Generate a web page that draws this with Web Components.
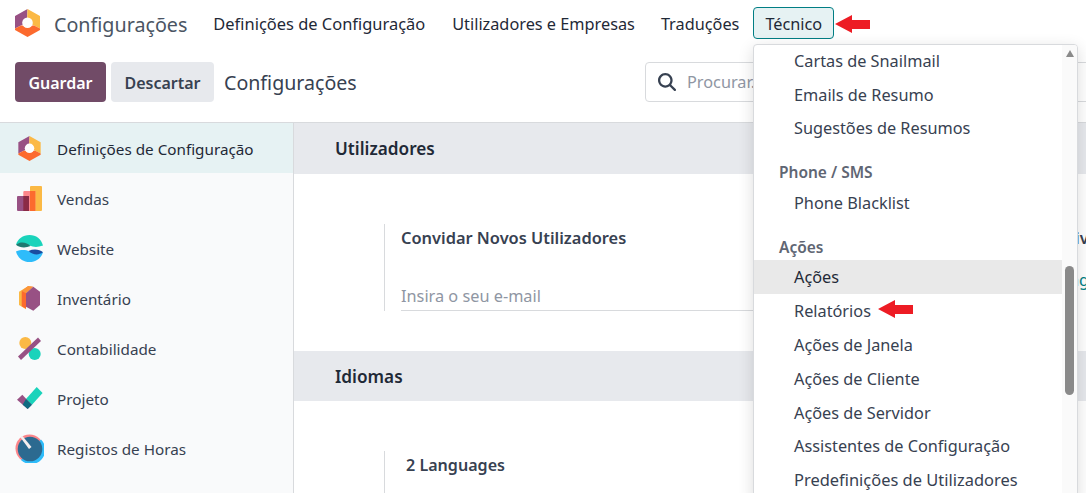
<!DOCTYPE html>
<html lang="pt"><head><meta charset="utf-8"><title>Configurações</title>
<style>
html,body{margin:0;height:100%;overflow:hidden;background:#fff}
body{font-family:"Noto Sans","Open Sans",sans-serif;color:#374151;font-size:15px}
</style></head><body>
<app-shell>
  <top-nav></top-nav>
  <control-panel></control-panel>
  <div slot="side">
    <side-item active label="Definições de Configuração" icon="settings"></side-item>
    <side-item label="Vendas" icon="sales"></side-item>
    <side-item label="Website" icon="website"></side-item>
    <side-item label="Inventário" icon="inventory"></side-item>
    <side-item label="Contabilidade" icon="accounting"></side-item>
    <side-item label="Projeto" icon="project"></side-item>
    <side-item label="Registos de Horas" icon="timesheet"></side-item>
    <side-item label="" icon="more"></side-item>
  </div>
  <settings-pane slot="main"></settings-pane>
  <tech-menu slot="overlay"></tech-menu>
</app-shell>
<script>
const hex=(w,h)=>`<svg viewBox="0 0 25 28" width="${w}" height="${h}"><path d="M12.500 0 0 7V19.500L6 16.500 12 14z" fill="#985184"/><path d="M12.500 0 25 7V19.500L19 16.500 12 14z" fill="#fbb945"/><path d="M0 19.500 6 16.500H19L25 19.500V21L12.500 28 0 21z" fill="#fc6a2e"/><circle cx="12.500" cy="13.800" r="5.300" fill="#fdfdfd"/></svg>`;
const ICONS={
settings:hex(23,25),
sales:`<svg viewBox="0 0 25 25" width="25" height="25"><path d="M13 1a1 1 0 0 1 1-1h10a1 1 0 0 1 1 1v23a1 1 0 0 1-1 1H13z" fill="#fbb945"/><path d="M6.300 6a1 1 0 0 1 1-1h11v20H6.300z" fill="#fc868b"/><rect x="13" y="5" width="5.300" height="20" fill="#fc6a2e"/><path d="M0 11a1 1 0 0 1 1-1h11v15H1a1 1 0 0 1-1-1z" fill="#985184"/><rect x="6.300" y="10" width="5.700" height="15" fill="#8b2b46"/></svg>`,
website:`<svg viewBox="0 0 30 30" width="29" height="29"><path d="M1 11C3 5 8 1 15 1c7 0 12 4 14 11-6 2-10 1.500-14 0-5-2-9-3-14-1z" fill="#1ad3bb"/><path d="M1 11c5-3.500 11-2.500 15 1.500-5 2-11 2-15-1.500z" fill="#1f7a70"/><g transform="rotate(180 15 15)"><path d="M1 11C3 5 8 1 15 1c7 0 12 4 14 11-6 2-10 1.500-14 0-5-2-9-3-14-1z" fill="#2ebcfa"/><path d="M1 11c5-3.500 11-2.500 15 1.500-5 2-11 2-15-1.500z" fill="#1a4da0"/></g></svg>`,
inventory:`<svg viewBox="0 0 21 25" width="21" height="25"><path d="M9.300 0 0 5.700V19l7 4.200V7z" fill="#fbb945"/><path d="M9.300 0l5 .7L7 7.300v15.500L2.700 20.300V5z" fill="#fc6a2e"/><path d="M9.300 0l5 .7L7 7.300 2.700 5z" fill="#fbb945" opacity=".55"/><path d="M14.300.7 21 5.700V19l-6.700 5.700L7 20.700V7.300z" fill="#985184"/></svg>`,
accounting:`<svg viewBox="0 0 23 23" width="23" height="23"><circle cx="7.300" cy="6" r="6" fill="#fbb945"/><circle cx="16.700" cy="17" r="6" fill="#1ad3bb"/><path d="M0 19.500 20 .5l3 3.500L3 23z" fill="#985184"/></svg>`,
project:`<svg viewBox="0 0 26 23" width="26" height="23"><path d="M19.700 0 25.600 6 15 17.700 9 12z" fill="#1ad3bb"/><path d="M0 12.700 5.300 7.700 14.700 17.700 10.700 22z" fill="#985184"/><path d="M9 12l6 5.700L10.700 22l-5-4.300z" fill="#0e6a80"/></svg>`,
timesheet:`<svg viewBox="0 0 29 29" width="29" height="29"><circle cx="14.500" cy="14.500" r="14" fill="#fc868b"/><path d="M26 5.500A14 14 0 0 1 6 26z" fill="#2ebcfa"/><circle cx="15" cy="15" r="12.300" fill="#2c6a90"/><path d="M5.500 3.500l2-1.500 9 11-2.500 2z" fill="#f6eeee"/></svg>`,
more:`<svg viewBox="0 0 11 11" width="11" height="11" style="position:relative;top:9px"><circle cx="5.500" cy="5.500" r="5.500" fill="#985184"/></svg>`
};
const ARROW=`<svg width="36" height="18" viewBox="0 0 36 18"><path d="M0 9 17 0v5h18v9H17v4z" fill="#ed1c24"/></svg>`;

customElements.define('app-shell',class extends HTMLElement{constructor(){super();this.attachShadow({mode:'open'}).innerHTML=`<style>
:host{display:flex;flex-direction:column;height:493px;width:1086px;position:relative;overflow:hidden}
.body{display:flex;flex:1;min-height:0;border-top:1px solid #d8dadd}
.side{width:293px;flex:none;background:#f9fafb;border-right:1px solid #d8dadd;overflow:hidden}
.main{flex:1;overflow:hidden;min-width:0}
</style><slot></slot><div class="body"><div class="side"><slot name="side"></slot></div><div class="main"><slot name="main"></slot></div></div><slot name="overlay"></slot>`}});

customElements.define('top-nav',class extends HTMLElement{constructor(){super();this.attachShadow({mode:'open'}).innerHTML=`<style>
:host{display:flex;align-items:center;height:46px;padding:2px 0 0 15px;box-sizing:border-box}
.logo{width:25px;height:28px;display:block;margin-top:-2px}
.logo svg{display:block}
.brand{font-size:19.700px;color:#4b5563;margin:0 26px 0 14px;white-space:nowrap}
.item{font-size:16.300px;line-height:24px;color:#1f2937;white-space:nowrap;margin-right:27px}
.first{font-size:16.440px}
.second{margin-right:26px}
.tech{border:1px solid #017e84;background:#e6f2f3;border-radius:4px;height:32px;box-sizing:border-box;display:flex;align-items:center;padding:1px 11px 0;margin:-2px 0 0 -13px}
.arrow{margin-left:1px;display:flex}
</style><span class="logo">${hex(25,28)}</span><span class="brand">Configurações</span><span class="item first">Definições de Configuração</span><span class="item second">Utilizadores e Empresas</span><span class="item">Traduções</span><span class="item tech" style="margin-right:0">Técnico</span><span class="arrow">${ARROW}</span>`}});

customElements.define('control-panel',class extends HTMLElement{constructor(){super();this.attachShadow({mode:'open'}).innerHTML=`<style>
:host{display:flex;align-items:center;height:76px;padding:0 0 4px 15px;box-sizing:border-box}
button{font:inherit;font-size:16px;font-weight:600;border:0;border-radius:4px;height:40px;padding:1px 0 0;display:block}
.save{background:#714b67;color:#fff;width:91px}
.disc{background:#e7e9ed;color:#374151;width:103px;margin-left:5px}
.title{font-size:19.600px;color:#374151;margin-left:10px;flex:1;white-space:nowrap;padding-top:1px}
.search{width:460px;height:40px;box-sizing:border-box;border:1px solid #d8dadd;border-radius:4px;margin-right:-19px;display:flex;align-items:center;padding-left:12px;gap:11px;color:#8f96a3;font-size:16.300px}
</style><button class="save">Guardar</button><button class="disc">Descartar</button><span class="title">Configurações</span><div class="search"><svg width="18" height="18" viewBox="0 0 512 512"><path fill="#374151" d="M416 208c0 45.900-14.900 88.300-40 122.700L502.600 457.400c12.500 12.500 12.500 32.800 0 45.300s-32.800 12.500-45.300 0L330.700 376c-34.400 25.200-76.800 40-122.700 40C93.100 416 0 322.900 0 208S93.100 0 208 0S416 93.100 416 208zM208 352a144 144 0 1 0 0-288 144 144 0 1 0 0 288z"/></svg><span>Procurar...</span></div>`}});

customElements.define('side-item',class extends HTMLElement{connectedCallback(){if(this.shadowRoot)return;this.attachShadow({mode:'open'}).innerHTML=`<style>
:host{display:flex;align-items:center;height:50px;box-sizing:border-box}
:host([active]){background:#e6f2f3}
:host([active]) .t{color:#1f2937}
.i{width:55px;flex:none;display:flex;justify-content:center;box-sizing:content-box;padding-left:2px;height:30px;align-items:center}
.i svg{flex:none}
.t{font-size:15.250px;color:#374151;white-space:nowrap;padding-top:2px}
</style><span class="i">${ICONS[this.getAttribute('icon')]}</span><span class="t">${this.getAttribute('label')}</span>`}});

customElements.define('settings-pane',class extends HTMLElement{constructor(){super();this.attachShadow({mode:'open'}).innerHTML=`<style>
:host{display:block}
h2{margin:0;background:#e7e9ed;height:51px;box-sizing:border-box;padding:0 0 1px 41px;display:flex;align-items:center;font-size:17.200px;font-weight:600;color:#1f2937}
h2.l{height:50px;padding-bottom:0}
.sec{height:177px;box-sizing:border-box;padding-top:50px;display:flex}
.box{margin-left:90px;border-left:1px solid #d8dadd;width:394px;flex:none;height:87px;padding-left:16px;box-sizing:border-box}
.lang .box{height:60px;padding-left:21px}
.h{font-size:16.400px;font-weight:600;color:#374151;line-height:28px;white-space:nowrap}
.lang .h{font-size:16.100px}
.inp{margin-top:31px;border-bottom:1px solid #d8dadd;height:28px;line-height:27px;color:#8f96a3;font-size:16.300px;width:420px;box-sizing:border-box}
.r{margin-left:258px;white-space:nowrap;flex:none}
.r b{display:block;font-weight:600;font-size:16.200px;line-height:28px;color:#374151}
.r a{display:block;color:#017e84;font-size:16.300px;margin-top:17px}
</style><h2>Utilizadores</h2><div class="sec"><div class="box"><div class="h">Convidar Novos Utilizadores</div><div class="inp">Insira o seu e-mail</div></div><div class="r"><b>1 Active User</b><a>Manage Users</a></div></div><h2 class="l">Idiomas</h2><div class="sec lang"><div class="box"><div class="h">2 Languages</div></div></div>`}});

customElements.define('tech-menu',class extends HTMLElement{constructor(){super();
const it=(t,c='')=>`<div class="it ${c}">${t}</div>`;
this.attachShadow({mode:'open'}).innerHTML=`<style>
:host{position:absolute;left:753px;top:44px;width:325px;height:460px;box-sizing:border-box;background:#fff;border:1px solid #d8dadd;border-radius:4px;box-shadow:0 4px 16px rgba(0,0,0,.14);overflow:hidden;display:flex}
.list{flex:1;min-width:0}
.it{height:33.900px;line-height:35px;padding-left:40px;font-size:16.300px;color:#374151;white-space:nowrap}
.it.top{height:33.600px;line-height:33.600px}
.it.mid{height:33.750px;line-height:34.500px}
.it.tail{line-height:33.900px}
.it.last{font-size:16.450px}
.it.hl{background:#e9e9e9;color:#1f2937}
.hd{height:27px;line-height:26px;padding-left:25px;margin-top:13.300px;font-size:15.500px;font-weight:600;color:#5f6673}
.hd.b{line-height:28px}
.bar{width:15px;flex:none;background:#fafafa;display:flex;flex-direction:column;align-items:center}
.up{width:0;height:0;border-left:4.500px solid transparent;border-right:4.500px solid transparent;border-bottom:7px solid #8a8a8a;margin-top:5px}
.th{width:9px;height:129px;background:#8a8a8a;border-radius:4.500px;margin-top:209px}
.arrow{position:absolute;left:124px;top:255px;display:flex}
</style><div class="list">${it('Cartas de Snailmail','top')}${it('Emails de Resumo','top')}${it('Sugestões de Resumos','top')}<div class="hd">Phone / SMS</div>${it('Phone Blacklist','mid')}<div class="hd b">Ações</div>${it('Ações','hl')}${it('Relatórios')}${it('Ações de Janela')}${it('Ações de Cliente')}${it('Ações de Servidor')}${it('Assistentes de Configuração','tail')}${it('Predefinições de Utilizadores','last tail')}</div><div class="bar"><div class="up"></div><div class="th"></div></div><span class="arrow">${ARROW}</span>`}});
</script>
</body></html>
